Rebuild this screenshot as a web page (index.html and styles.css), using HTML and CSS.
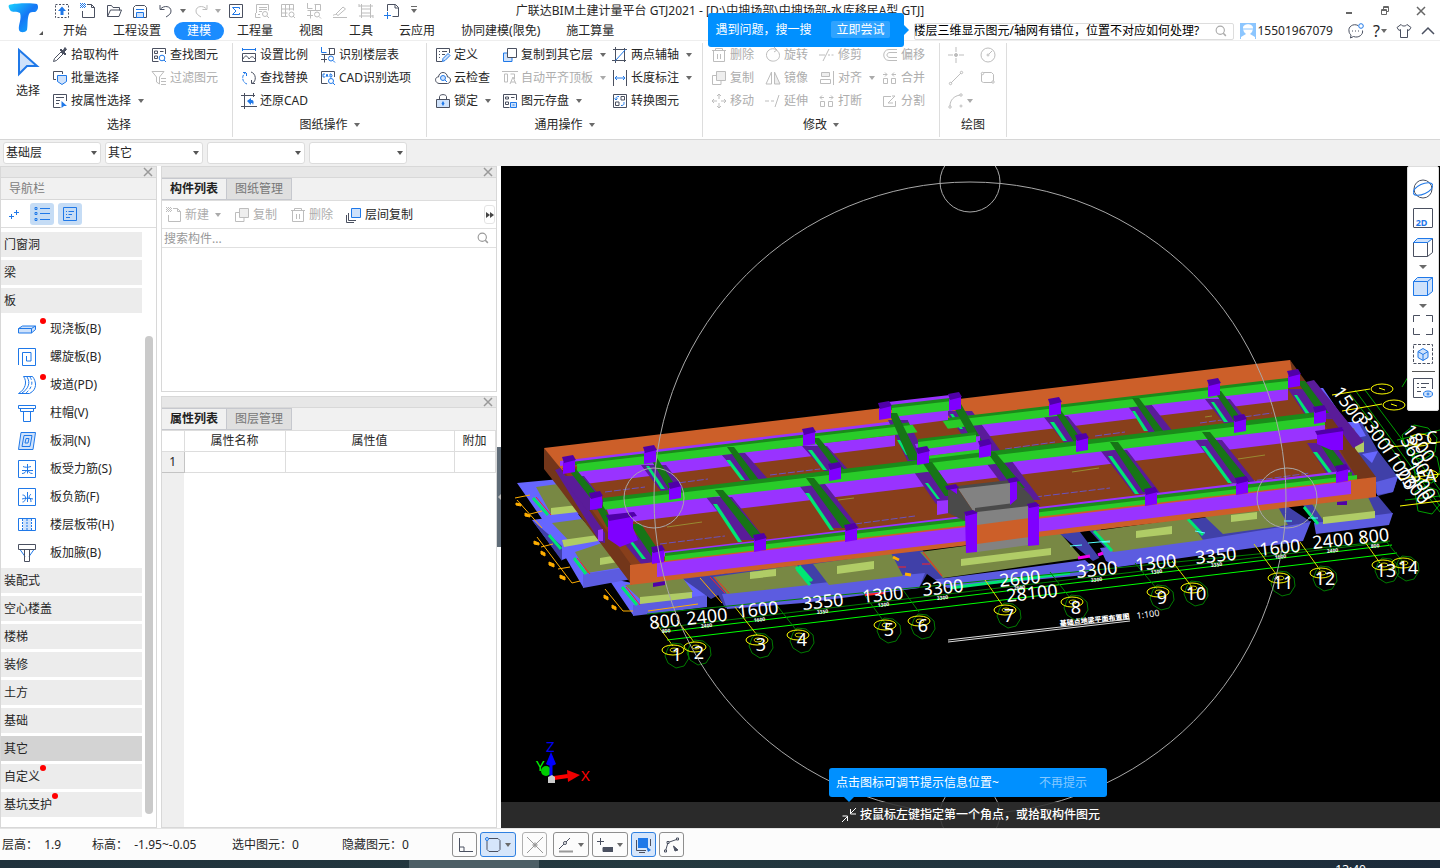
FILE: index.html
```html
<!DOCTYPE html>
<html lang="zh-CN">
<head>
<meta charset="utf-8">
<title>广联达BIM土建计量平台 GTJ2021</title>
<link rel="stylesheet" href="styles.css">
</head>
<body>
<svg class="defs" aria-hidden="true">
  <defs>
    <linearGradient id="lg" x1="0" y1="0" x2="1" y2="1"><stop offset="0" stop-color="#19d3ff"/><stop offset=".5" stop-color="#1677f5"/><stop offset="1" stop-color="#10b4ff"/></linearGradient>
    <symbol id="i-up" viewBox="0 0 16 16"><path d="M1.500 1.500h13v13h-13z" stroke-dasharray="2 1.500"/><path class="af" d="M8 3.500l4 4.500H9.500v4h-3V8H4z"/></symbol>
    <symbol id="i-new" viewBox="0 0 16 16"><path d="M7 1.500h4.500l3 3v10h-12V8M11.500 1.500v3h3"/><path class="a" d="M0 .500h5M1 1.500h5M0 2.500h5M1 3.500h5M0 4.500h5" stroke-dasharray="1 1"/></symbol>
    <symbol id="i-open" viewBox="0 0 16 16"><path d="M1.500 13.500v-11h4l1.500 2h6.500v3M1.500 13.500l3-6.500h11l-2.500 6.500z"/></symbol>
    <symbol id="i-save" viewBox="0 0 16 16"><path d="M1.500 14.500v-10l2-2h9l2 2v10z"/><path class="al" d="M4.500 9.500h7v5h-7z"/><path class="a" d="M4 6.500h8"/></symbol>
    <symbol id="i-undo" viewBox="0 0 16 16"><path d="M2 2v4.500h4.500M2.500 6C6 2 13 3 13 8c0 3-2 4-5 6"/></symbol>
    <symbol id="i-redo" viewBox="0 0 16 16"><path d="M14 2v4.500H9.500M13.500 6C10 2 3 3 3 8c0 3 2 4 5 6"/></symbol>
    <symbol id="i-sum" viewBox="0 0 16 16"><path d="M1.500 1.500h13v13h-13z"/><path class="a" d="M11.500 6V4.500h-7L8 8l-3.500 3.500h7V10"/></symbol>
    <symbol id="i-rows" viewBox="0 0 16 16"><path d="M2.500 10V1.500h12v6M1.500 10v4.500h5M4 11.500h2M5 4.500h8M5 6.500h8M5 8.500h3" /><circle cx="11" cy="11" r="2.500"/><path d="M13 13l2 2"/></symbol>
    <symbol id="i-grid" viewBox="0 0 16 16"><path d="M1.500 14V1.500h12v6M1.500 6h12M1.500 10h6M5.500 1.500v12M9.500 1.500v6M1.500 13.500h6"/><circle cx="11.500" cy="11.500" r="2.500"/><path d="M13 13l2 2"/></symbol>
    <symbol id="i-plan" viewBox="0 0 16 16"><path class="a" d="M1.500 0v5.500h5"/><path d="M8.500 1.500h6v6h-13M4.500 7.500v8M1 12.500h6M9.500 1.500v6"/><circle class="a" cx="11" cy="11.500" r="2.500"/><path class="a" d="M13 13.500l2 2"/></symbol>
    <symbol id="i-brush" viewBox="0 0 16 16"><path d="M1 14.500h14M4 11l7-7 2.500 2L6 12.500zM1 12.500c1-1 2-1 3-1"/></symbol>
    <symbol id="i-rebar" viewBox="0 0 16 16"><path d="M3.500 1v14M12.500 1v14M1 3h14M1 13h14M3.500 6h9M3.500 10h9M1 1v3M15 12v3"/></symbol>
    <symbol id="i-adddoc" viewBox="0 0 16 16"><path d="M3.500 8V1.500h8l3 3v9h-6M11 1.500V5h3.500"/><path class="a" d="M0 12.500h7M3.500 9v7"/></symbol>
    <symbol id="i-cursor" viewBox="0 0 24 30"><path class="al" stroke-width="2" d="M3 3l18 16H11l-8 8z"/></symbol>
    <symbol id="i-pick" viewBox="0 0 16 16"><path d="M1.500 14.500l1-3L9 5l2 2-6.500 6.500z"/><path class="f" d="M8 3l5 5 1-1-2-2 2.500-2.500-1.500-2L11 4 9 2z"/></symbol>
    <symbol id="i-batch" viewBox="0 0 16 16"><path d="M4 9.500H1.500v-8h9V4"/><path class="al" d="M5.500 5.500l9 0v6l-4.500 3-4.500-3z"/></symbol>
    <symbol id="i-prop" viewBox="0 0 16 16"><path d="M14.500 8V1.500h-13v13h7M4 4.500h8M4 7.500h4M4 10.500h3"/><path class="af" d="M9.500 8l5.500 5h-3l-2.500 2z"/></symbol>
    <symbol id="i-find" viewBox="0 0 16 16"><path d="M14.500 7V1.500h-13v13h6M3.500 4h3v2.500h-3zM9 4.500h3.500M3.500 9h3v2.500h-3z"/><circle class="a" cx="11" cy="11" r="2.800"/><path class="a" d="M13 13l2 2"/></symbol>
    <symbol id="i-filter" viewBox="0 0 16 16"><path d="M1 1.500h12L8.500 7v7l-3-2V7zM10 8.500h5M10 11.500h5M10 14.500h5"/></symbol>
    <symbol id="i-scale" viewBox="0 0 16 16"><path class="a" d="M1 2.500h14M1.500 1v3M14.500 1v3"/><path d="M1.500 6.500h13v8h-13zM2 12c2-4 4-4 6 0 2-3 4-3 6 0"/></symbol>
    <symbol id="i-swap" viewBox="0 0 16 16"><path class="a" d="M6 14C1 12.500 0 5 5 2.500M2 2.500h3.500V6" stroke-dasharray="3 1"/><path d="M10 2c5 1.500 6 9 1 11.500M14 13.500h-3.500V10"/></symbol>
    <symbol id="i-back" viewBox="0 0 16 16"><path d="M0 2.500h14M3.500 0v16M0 13.500h16M12.500 0v4"/><path class="af" d="M6 8l4-3v2c3 0 3 2 2 5-.500-2-1-2-2-2v2z"/></symbol>
    <symbol id="i-cad" viewBox="0 0 16 16"><path d="M14.500 7V1.500h-13v12h6"/><path class="a" d="M5 4H3v3h2M6 7l1-3 1 3M10 4v3h1.500l.5-1.500L11 4z"/><circle class="a" cx="11" cy="11" r="2.500"/><path class="a" d="M13 13l2 2"/></symbol>
    <symbol id="i-define" viewBox="0 0 16 16"><path d="M7 14.500H1.500v-13h13V6M4 4.500h1M7 4.500h5M4 7.500h1M7 7.500h3M4 10.500h1"/><path class="al" d="M7.500 14.500l.5-3 5-5 2 2-5 5z"/></symbol>
    <symbol id="i-cloud" viewBox="0 0 16 16"><path d="M4 13.500C-1 12.500 0 6.500 3.500 7 4 1 12 1 12.500 7c4 0 4 6 0 6.500z"/><circle class="al" cx="8" cy="8" r="2.500"/><path class="a" d="M10 10l2 2"/></symbol>
    <symbol id="i-lock" viewBox="0 0 16 16"><path d="M4.500 6V3.500C5 1 11 1 11.500 3.500V6"/><path class="l" d="M1.500 6.500h13v8h-13z"/><path class="af" d="M8 8l1.500 2.500L8 13l-1.500-2.500z"/></symbol>
    <symbol id="i-copyto" viewBox="0 0 16 16"><path class="al" d="M5 6H1.500v8.500H10V11"/><path class="w" d="M5.500 1.500h9v9h-9z"/></symbol>
    <symbol id="i-align" viewBox="0 0 16 16"><path d="M0 1.500h16M2.500 4h3v8h-3zM8.500 4h4v5M8 14l3-7 3 7M9 12h4"/></symbol>
    <symbol id="i-store" viewBox="0 0 16 16"><path d="M14.500 7V1.500h-13v13h6M3.500 4h3v2h-3zM9 4.500h3.500M3.500 9h3v2.500h-3z"/><path class="al" d="M8.500 9.500h6v5h-6zM10.500 12h2"/></symbol>
    <symbol id="i-axis2" viewBox="0 0 16 16"><path d="M1 2.500h14M3.500 0v16M0 13.500h14M12.500 1v14"/><path class="a" d="M3.500 13.500l10-11"/></symbol>
    <symbol id="i-len" viewBox="0 0 16 16"><path d="M1.500 0v16M14.500 0v16"/><path class="a" d="M3 8h10M5 6L3 8l2 2M11 6l2 2-2 2"/></symbol>
    <symbol id="i-convert" viewBox="0 0 16 16"><path d="M1.500 1.500h13v13h-13zM9 3.500h3.500V7H9zM3.500 9H7v3.500H3.500z"/><path class="a" d="M7 3.500c-3 0-3 1-3 3.500M2.500 5.500L4 7l1.500-1.500M9 12.500c3 0 3-1 3-3.500"/></symbol>
    <symbol id="i-trash" viewBox="0 0 16 16"><path d="M1 3.500h14M4.500 3V1.500h7V3M2.500 4v10.500h11V4M6.500 7v5M9.500 7v5"/></symbol>
    <symbol id="i-rotate" viewBox="0 0 16 16"><path d="M11 2.500C6 0 1 4 1.500 8.500c1 8 13 7 13 0 0-2-1-4-2.500-5M9 0l3 3-3 2"/></symbol>
    <symbol id="i-trim" viewBox="0 0 16 16"><path d="M0 8h6M4 14L10 2"/><path d="M9 8h6" stroke-dasharray="2 1.500"/></symbol>
    <symbol id="i-offset" viewBox="0 0 16 16"><path d="M15 2.500H7c-7 0-7 11 0 11h8M15 5.500H8c-4 0-4 5 0 5h7"/></symbol>
    <symbol id="i-copy" viewBox="0 0 16 16"><path d="M5 5.500H1.500v9H10V11"/><path class="l" d="M5.500 1.500h9v9h-9z"/></symbol>
    <symbol id="i-mirror" viewBox="0 0 16 16"><path d="M6.500 2v12H1z"/><path class="l" d="M9.500 2v12H15z"/></symbol>
    <symbol id="i-al" viewBox="0 0 16 16"><path class="l" d="M2.500 2.500h8v4h-8z"/><path d="M1.500 9.500h10v4h-10zM14.500 1v14"/></symbol>
    <symbol id="i-merge" viewBox="0 0 16 16"><path d="M1.500 8.500h4v5h-4zM9.500 8.500h4v5h-4zM1 4.500h4M3 2.500l2 2-2 2M14 4.500h-4M12 2.500l-2 2 2 2"/></symbol>
    <symbol id="i-break" viewBox="0 0 16 16"><path d="M1.500 8.500h4v5h-4zM9.500 8.500h4v5h-4zM5 4.500H1M3 2.500l-2 2 2 2M10 4.500h4M12 2.500l2 2-2 2"/></symbol>
    <symbol id="i-move" viewBox="0 0 16 16"><path d="M8 1v5M8 10v5M1 8h5M10 8h5M6 3l2-2 2 2M6 13l2 2 2-2M3 6L1 8l2 2M13 6l2 2-2 2"/></symbol>
    <symbol id="i-extend" viewBox="0 0 16 16"><path d="M0 8h9" stroke-dasharray="4 2"/><path d="M10 14l4-12"/></symbol>
    <symbol id="i-split" viewBox="0 0 16 16"><path d="M9 3.500H1.500v10h12V8M6 10l7-7M10 3h3M6 10h5"/></symbol>
    <symbol id="i-point" viewBox="0 0 16 16"><path d="M0 8h5M11 8h5M8 0v5M8 11v5"/><circle class="f" cx="8" cy="8" r="1.500"/></symbol>
    <symbol id="i-circle" viewBox="0 0 16 16"><circle cx="8" cy="8" r="7"/><circle cx="8" cy="8" r="1"/><path d="M9 7l3-3"/></symbol>
    <symbol id="i-line" viewBox="0 0 16 16"><path d="M3 13L13 3"/><circle cx="2.500" cy="13.500" r="1.200"/><circle cx="13.500" cy="2.500" r="1.200"/></symbol>
    <symbol id="i-rect" viewBox="0 0 16 16"><path d="M3.500 2.500h8l2 2v8h-10l-2-1v-8z"/><circle class="w" cx="2.500" cy="3.500" r="1.200"/><circle class="w" cx="13" cy="12" r="1.200"/></symbol>
    <symbol id="i-arc" viewBox="0 0 16 16"><path d="M2 13C2 7 6 3 12 2"/><circle cx="2" cy="14" r="1.200"/><circle cx="13" cy="2" r="1.200"/><circle cx="13" cy="13" r="1"/></symbol>
    <symbol id="i-search" viewBox="0 0 16 16"><circle cx="7" cy="7" r="5.500" stroke-width="1.500"/><path d="M11 11l3.500 3.500" stroke-width="2"/></symbol>
    <symbol id="i-chat" viewBox="0 0 16 16"><path d="M10 2.500C5 0 0 4 1 8c0 2 1 3 2 4l-.500 3 3-1.500c5 2 10-2 9-6M4 8h1M7 8h1M10 8h1"/><circle class="a" cx="13" cy="3" r="2.300"/></symbol>
    <symbol id="i-shirt" viewBox="0 0 16 16"><path d="M5 1.500c1 2 5 2 6 0l4 3-2 3-1.500-1v8h-7v-8l-1.500 1-2-3z"/></symbol>
    <symbol id="i-chev" viewBox="0 0 16 16"><path d="M2 11l6-6 6 6" stroke-width="1.500"/></symbol>
    <symbol id="i-x" viewBox="0 0 16 16"><path d="M4 4l8 8M12 4l-8 8" stroke-width="1.500"/></symbol>
    <symbol id="i-min" viewBox="0 0 16 16"><path d="M5 10h6" stroke-width="2"/></symbol>
    <symbol id="i-restore" viewBox="0 0 16 16"><path d="M4.500 6.500h5v5h-5zM4.500 7.500h5M6.500 6V3.500h5v5H10M6.500 4.500h5"/></symbol>
    <symbol id="i-plus" viewBox="0 0 16 16"><path class="a" d="M3 10.500h5M5.500 8v5M8 6.500h5M10.500 4v5"/></symbol>
    <symbol id="i-list" viewBox="0 0 16 16"><path class="a" d="M6 2.500h10M6 7.500h10M6 13.500h10M1 1.500h2v2H1zM1 6.500h2v2H1zM1 12.500h2v2H1z"/></symbol>
    <symbol id="i-doc" viewBox="0 0 16 16"><path class="a" d="M1.500 1.500h13v13h-13zM4 5.500h1M6.500 5.500H12M4 8.500h1M6.500 8.500H10M4 11.500h4"/></symbol>
    <symbol id="i-layers" viewBox="0 0 16 16"><path d="M2.500 6v7.500H10M.500 8v7.500H8"/><path class="al" d="M5.500 1.500h9v9h-9z"/></symbol>
    <symbol id="n-slab" viewBox="0 0 18 18"><path class="al" d="M.500 8.500l4-2.500h13v3.500l-4 3.500H.500z"/><path class="a" d="M.500 8.500h13V13M13.500 8.500l4-2.500"/></symbol>
    <symbol id="n-spiral" viewBox="0 0 18 18"><path class="a" d="M.500 17V.500h17v17H4.500v-13H13v8.500H8.500V8"/></symbol>
    <symbol id="n-ramp" viewBox="0 0 18 18"><path class="a" d="M5.500 .500c4 5 2 13-5 17h11c8-4 7-12 3-17zM9 1c4 6 1 12-5 16"/><path class="a" d="M12 1c4 6 1 12-4 16" stroke-dasharray="3 2"/></symbol>
    <symbol id="n-cap" viewBox="0 0 18 18"><path class="a" d="M.500 1.500h17v3h-17zM2.500 4.500h13v3h-13zM5.500 7.500h7v10h-7z"/></symbol>
    <symbol id="n-hole" viewBox="0 0 18 18"><path class="al" d="M3 .500h14.500L15 17.500H.500zM6 3.500h8l-2 11H4z"/><path class="a" d="M8 6.500h3L10 11H7z"/></symbol>
    <symbol id="n-force" viewBox="0 0 18 18"><path class="a" d="M.500 .500h17v17H.500zM4 10.500h11M5 6.500c2 1 5 1 8 0M9.500 4v9.500M4 13.500c3 0 4-2 4-3M14.500 13.500c-3 0-4-2-4-3"/></symbol>
    <symbol id="n-neg" viewBox="0 0 18 18"><path class="a" d="M.500 .500h17v17H.500zM4 11c3-1 7-1 11 0M9.500 4v10M4.500 7c2 0 3 1 3 3s-1 4-3 4M13 6c-1 1-2 2-2 4 1 0 2 1 2 4"/></symbol>
    <symbol id="n-band" viewBox="0 0 18 18"><path fill="#cfe2fb" stroke="none" d="M5 3h8v12H5z"/><path class="a" d="M.500 2.500h17v12H.500z"/><path class="a" d="M4.500 3v11M9 3v11M13.500 3v11" stroke-dasharray="2 1"/></symbol>
    <symbol id="n-haunch" viewBox="0 0 18 18"><path class="al" d="M2 5.500l5 7M16 5.500l-5 7"/><path d="M.500 .500h17v5H.500zM6.500 5.500h5v12h-5z"/></symbol>
    <symbol id="v-orbit" viewBox="0 0 20 20"><circle cx="10" cy="10" r="9"/><ellipse class="a" cx="10" cy="10" rx="10.500" ry="5" transform="rotate(-25 10 10)"/></symbol>
    <symbol id="v-cube" viewBox="0 0 20 20"><path d="M.500 5.500h14v14h-14zM14.500 19.500l5-4V1.500"/><path class="al" d="M.500 5.500l4-4h15l-5 4z"/></symbol>
    <symbol id="v-solid" viewBox="0 0 20 20"><path class="al" d="M.500 5.500l4-4h15v14l-5 4h-14z"/><path class="a" d="M.500 5.500h14v14M14.500 5.500l5-4"/></symbol>
    <symbol id="v-full" viewBox="0 0 20 20"><path d="M.500 7V.500H7M13 .500h6.500V7M19.500 13v6.500H13M7 19.500H.500V13"/></symbol>
    <symbol id="v-sel" viewBox="0 0 20 20"><path d="M.500 .500h19v19H.500z" stroke-dasharray="3 1.500"/><path class="al" d="M10 4.500l5 3v6l-5 3-5-3v-6z"/><path class="a" d="M5 7.500l5 3 5-3M10 10.500v6"/></symbol>
    <symbol id="v-eye" viewBox="0 0 20 20"><path d="M19.500 11V.500H.500v19H10M4 5.500h2M8 5.500h8M4 9.500h2M8 9.500h5M4 13.500h4"/><ellipse class="al" cx="15" cy="16" rx="4.500" ry="3"/><circle class="a" cx="15" cy="16" r="1"/></symbol>
    <symbol id="s-ortho" viewBox="0 0 16 16"><path d="M2.500 1v13.500H16M2.500 10H7v4.500"/></symbol>
    <symbol id="s-snap" viewBox="0 0 16 16"><path d="M4 1.500h9l2 2v9l-2 2H4l-2-2V4"/><circle class="a" cx="2" cy="2" r="1.500"/></symbol>
    <symbol id="s-cross" viewBox="0 0 16 16"><path d="M0 0l16 16M16 0L0 16"/><circle cx="8" cy="8" r="2"/></symbol>
    <symbol id="s-angle" viewBox="0 0 16 16"><path d="M1 12L12 1"/><path stroke="#999" d="M1 14.500h14" stroke-width="2"/><circle class="w" cx="7" cy="6" r="1.500"/></symbol>
    <symbol id="s-input" viewBox="0 0 16 16"><path d="M0 4.500h7M3.500 1v7"/><path class="f" d="M6 10.500h10v4H6z"/></symbol>
    <symbol id="s-screen" viewBox="0 0 16 16"><path class="af" d="M2 1h10v10H2z"/><path d="M.500 3v10.500H10M14.500 2v7M3 15.500h6"/><path class="af" d="M10 9l5 4-3 2z"/></symbol>
    <symbol id="s-curve" viewBox="0 0 16 16"><path d="M1.500 14L4 5.500 14 2"/><path class="w" d="M.500 13h2v2h-2zM3 4.500h2v2H3zM12.500 1h2v2h-2z"/><path class="f" d="M9.500 9l4.500 4-3 1z"/></symbol>
    <g id="col"><path fill="#7f00ff" d="M-6 3L6 0v13l-12 2z"/><path fill="#5000a8" d="M-7-2L4-4l3 5-12 3z"/></g>
    <g id="bub"><path stroke="#007a00" d="M-5-12l9 1 7 6 1 8-5 8-8 2-8-5-3-7 3-8z"/><ellipse stroke="#ff0" cx="-4" cy="-5" rx="11" ry="5"/><ellipse stroke="#cc0" cx="-3" cy="-5" rx="4" ry="2"/></g>
  </defs>
</svg>

<header class="top">
  <div class="titlebar">
    <div class="quick">
      <button class="qb" aria-label="上传"><svg class="ic"><use href="#i-up"/></svg></button>
      <button class="qb" aria-label="新建"><svg class="ic"><use href="#i-new"/></svg></button>
      <button class="qb" aria-label="打开"><svg class="ic"><use href="#i-open"/></svg></button>
      <button class="qb" aria-label="保存"><svg class="ic"><use href="#i-save"/></svg></button>
      <button class="qb wide" aria-label="撤销"><svg class="ic"><use href="#i-undo"/></svg><i class="tri"></i></button>
      <button class="qb wide off" aria-label="恢复"><svg class="ic"><use href="#i-redo"/></svg><i class="tri"></i></button>
      <button class="qb" aria-label="汇总计算"><svg class="ic"><use href="#i-sum"/></svg></button>
      <button class="qb off" aria-label="查看"><svg class="ic"><use href="#i-rows"/></svg></button>
      <button class="qb off" aria-label="查表"><svg class="ic"><use href="#i-grid"/></svg></button>
      <button class="qb off" aria-label="查图"><svg class="ic"><use href="#i-plan"/></svg></button>
      <button class="qb off" aria-label="编辑"><svg class="ic"><use href="#i-brush"/></svg></button>
      <button class="qb off" aria-label="钢筋"><svg class="ic"><use href="#i-rebar"/></svg></button>
      <button class="qb" aria-label="添加"><svg class="ic"><use href="#i-adddoc"/></svg></button>
      <button class="qb small" aria-label="更多"><i class="tri bar"></i></button>
    </div>
    <h1 class="title">广联达BIM土建计量平台 GTJ2021 - [D:\中坤场部\中坤场部-水库移民A型.GTJ]</h1>
    <div class="win">
      <button aria-label="最小化"><svg class="ic"><use href="#i-min"/></svg></button>
      <button aria-label="还原"><svg class="ic"><use href="#i-restore"/></svg></button>
      <button aria-label="关闭"><svg class="ic"><use href="#i-x"/></svg></button>
    </div>
  </div>
  <div class="menubar">
    <nav class="menu">
      <a href="#">开始</a><a href="#">工程设置</a><a href="#" class="on">建模</a><a href="#">工程量</a><a href="#">视图</a><a href="#">工具</a><a href="#">云应用</a><a href="#">协同建模(限免)</a><a href="#">施工算量</a>
    </nav>
    <div class="account">
      <div class="ask">
        <input type="text" aria-label="搜索问题" value="楼层三维显示图元/轴网有错位，位置不对应如何处理?">
        <svg class="ic s12"><use href="#i-search"/></svg>
        <div class="tip-ask"><span>遇到问题，搜一搜</span><button>立即尝试</button></div>
      </div>
      <a href="#" class="user"><svg class="avatar" viewBox="0 0 16 16"><path fill="#8cc6ff" d="M0 0h16v16H0z"/><path fill="#fff" d="M3 5c0-5 10-5 10 0v1l-1 3-2 2 5 3v2H1v-2l5-3-2-2-1-3z"/><path stroke="#8cc6ff" d="M3 6h10"/></svg>15501967079</a>
      <button aria-label="消息"><svg class="ic"><use href="#i-chat"/></svg></button>
      <button aria-label="帮助" class="help">?<i class="tri"></i></button>
      <button aria-label="皮肤"><svg class="ic"><use href="#i-shirt"/></svg></button>
      <button aria-label="收起"><svg class="ic"><use href="#i-chev"/></svg></button>
    </div>
  </div>
  <svg class="logo" viewBox="0 0 46 40"><path fill="url(#lg)" d="M9 5c6-2 24-2 28-1 2 2 1 7-2 8-3 0-5 0-6 2-2 5-1 11-2 16-2 3-7 3-8 0-1-5 3-11 1-17-3-2-8 0-10-3-1-2-2-4-1-5z"/><path fill="#555" d="M43 31v4h-4z"/></svg>
</header>

<section class="ribbon">
  <div class="group g1">
    <div class="body">
      <button class="big"><svg class="ic"><use href="#i-cursor"/></svg>选择</button>
      <div class="tools">
        <button><svg class="ic"><use href="#i-pick"/></svg>拾取构件</button><button><svg class="ic"><use href="#i-find"/></svg>查找图元</button>
        <button><svg class="ic"><use href="#i-batch"/></svg>批量选择</button><button class="off"><svg class="ic"><use href="#i-filter"/></svg>过滤图元</button>
        <button><svg class="ic"><use href="#i-prop"/></svg>按属性选择<i class="tri"></i></button>
      </div>
    </div>
    <div class="cap">选择</div>
  </div>
  <div class="group g2">
    <div class="tools">
      <button><svg class="ic"><use href="#i-scale"/></svg>设置比例</button><button><svg class="ic"><use href="#i-plan"/></svg>识别楼层表</button>
      <button><svg class="ic"><use href="#i-swap"/></svg>查找替换</button><button><svg class="ic"><use href="#i-cad"/></svg>CAD识别选项</button>
      <button><svg class="ic"><use href="#i-back"/></svg>还原CAD</button>
    </div>
    <div class="cap">图纸操作<i class="tri"></i></div>
  </div>
  <div class="group g3">
    <div class="tools">
      <button><svg class="ic"><use href="#i-define"/></svg>定义</button><button><svg class="ic"><use href="#i-copyto"/></svg>复制到其它层<i class="tri"></i></button><button><svg class="ic"><use href="#i-axis2"/></svg>两点辅轴<i class="tri"></i></button>
      <button><svg class="ic"><use href="#i-cloud"/></svg>云检查</button><button class="off"><svg class="ic"><use href="#i-align"/></svg>自动平齐顶板<i class="tri"></i></button><button><svg class="ic"><use href="#i-len"/></svg>长度标注<i class="tri"></i></button>
      <button><svg class="ic"><use href="#i-lock"/></svg>锁定<i class="tri"></i></button><button><svg class="ic"><use href="#i-store"/></svg>图元存盘<i class="tri"></i></button><button><svg class="ic"><use href="#i-convert"/></svg>转换图元</button>
    </div>
    <div class="cap">通用操作<i class="tri"></i></div>
  </div>
  <div class="group g4">
    <div class="tools">
      <button class="off"><svg class="ic"><use href="#i-trash"/></svg>删除</button><button class="off"><svg class="ic"><use href="#i-rotate"/></svg>旋转</button><button class="off"><svg class="ic"><use href="#i-trim"/></svg>修剪</button><button class="off"><svg class="ic"><use href="#i-offset"/></svg>偏移</button>
      <button class="off"><svg class="ic"><use href="#i-copy"/></svg>复制</button><button class="off"><svg class="ic"><use href="#i-mirror"/></svg>镜像</button><button class="off"><svg class="ic"><use href="#i-al"/></svg>对齐<i class="tri"></i></button><button class="off"><svg class="ic"><use href="#i-merge"/></svg>合并</button>
      <button class="off"><svg class="ic"><use href="#i-move"/></svg>移动</button><button class="off"><svg class="ic"><use href="#i-extend"/></svg>延伸</button><button class="off"><svg class="ic"><use href="#i-break"/></svg>打断</button><button class="off"><svg class="ic"><use href="#i-split"/></svg>分割</button>
    </div>
    <div class="cap">修改<i class="tri"></i></div>
  </div>
  <div class="group g5">
    <div class="tools">
      <button class="off" aria-label="点"><svg class="ic"><use href="#i-point"/></svg></button><button class="off" aria-label="圆"><svg class="ic"><use href="#i-circle"/></svg></button>
      <button class="off" aria-label="直线"><svg class="ic"><use href="#i-line"/></svg></button><button class="off" aria-label="矩形"><svg class="ic"><use href="#i-rect"/></svg></button>
      <button class="off" aria-label="弧线"><svg class="ic"><use href="#i-arc"/></svg><i class="tri tight"></i></button>
    </div>
    <div class="cap">绘图</div>
  </div>
</section>

<section class="selbar">
  <label class="sel"><select aria-label="楼层"><option>基础层</option></select></label>
  <label class="sel"><select aria-label="构件类型"><option>其它</option></select></label>
  <label class="sel"><select aria-label="构件"><option></option></select></label>
  <label class="sel"><select aria-label="名称"><option></option></select></label>
</section>

<main class="main">
  <aside class="nav">
    <div class="strip"><button aria-label="关闭导航栏"><svg class="ic"><use href="#i-x"/></svg></button></div>
    <h2 class="navhead">导航栏</h2>
    <div class="navtools">
      <button aria-label="展开"><svg class="ic"><use href="#i-plus"/></svg></button>
      <button class="on" aria-label="列表"><svg class="ic"><use href="#i-list"/></svg></button>
      <button class="on" aria-label="详情"><svg class="ic"><use href="#i-doc"/></svg></button>
    </div>
    <div class="navbody">
      <div class="tree">
        <a href="#" class="cat">门窗洞</a>
        <a href="#" class="cat">梁</a>
        <a href="#" class="cat">板</a>
        <a href="#" class="leaf"><span class="nicon dot"><svg class="ic"><use href="#n-slab"/></svg></span>现浇板(B)</a>
        <a href="#" class="leaf"><span class="nicon"><svg class="ic"><use href="#n-spiral"/></svg></span>螺旋板(B)</a>
        <a href="#" class="leaf"><span class="nicon dot"><svg class="ic"><use href="#n-ramp"/></svg></span>坡道(PD)</a>
        <a href="#" class="leaf"><span class="nicon"><svg class="ic"><use href="#n-cap"/></svg></span>柱帽(V)</a>
        <a href="#" class="leaf"><span class="nicon"><svg class="ic"><use href="#n-hole"/></svg></span>板洞(N)</a>
        <a href="#" class="leaf"><span class="nicon"><svg class="ic"><use href="#n-force"/></svg></span>板受力筋(S)</a>
        <a href="#" class="leaf"><span class="nicon"><svg class="ic"><use href="#n-neg"/></svg></span>板负筋(F)</a>
        <a href="#" class="leaf"><span class="nicon"><svg class="ic"><use href="#n-band"/></svg></span>楼层板带(H)</a>
        <a href="#" class="leaf"><span class="nicon"><svg class="ic"><use href="#n-haunch"/></svg></span>板加腋(B)</a>
        <a href="#" class="cat">装配式</a>
        <a href="#" class="cat">空心楼盖</a>
        <a href="#" class="cat">楼梯</a>
        <a href="#" class="cat">装修</a>
        <a href="#" class="cat">土方</a>
        <a href="#" class="cat">基础</a>
        <a href="#" class="cat on">其它</a>
        <a href="#" class="cat"><span class="dot">自定义</span></a>
        <a href="#" class="cat"><span class="dot">基坑支护</span></a>
      </div>
      <div class="sbar"><div class="thumb"></div></div>
    </div>
  </aside>

  <div class="mid">
    <section class="panel pa">
      <div class="strip"><button aria-label="关闭构件列表"><svg class="ic"><use href="#i-x"/></svg></button></div>
      <div class="tabs"><button class="on">构件列表</button><button>图纸管理</button></div>
      <div class="ptools">
        <button class="off"><svg class="ic"><use href="#i-new"/></svg>新建<i class="tri"></i></button>
        <button class="off"><svg class="ic"><use href="#i-copy"/></svg>复制</button>
        <button class="off"><svg class="ic"><use href="#i-trash"/></svg>删除</button>
        <button><svg class="ic"><use href="#i-layers"/></svg>层间复制</button>
        <button class="more" aria-label="更多"><i class="rt"></i><i class="rt"></i></button>
      </div>
      <div class="psearch"><input type="text" placeholder="搜索构件..." aria-label="搜索构件"><svg class="ic s12"><use href="#i-search"/></svg></div>
    </section>
    <section class="panel pb">
      <div class="strip"><button aria-label="关闭属性列表"><svg class="ic"><use href="#i-x"/></svg></button></div>
      <div class="tabs"><button class="on">属性列表</button><button>图层管理</button></div>
      <table class="props">
        <colgroup><col class="c0"><col class="c1"><col class="c2"><col class="c3"></colgroup>
        <thead><tr><th></th><th>属性名称</th><th>属性值</th><th>附加</th></tr></thead>
        <tbody><tr><td>1</td><td></td><td></td><td></td></tr></tbody>
      </table>
      <div class="gutter"></div>
    </section>
  </div>
  <div class="split"><button aria-label="折叠面板"></button></div>

  <section class="view">
    <svg class="scene" viewBox="501 166 939 662" preserveAspectRatio="xMidYMid slice">
      <!-- foundation slabs, left -->
      <path fill="#6666ff" d="M517 483l43-4 27 34-45 6zM532 520l46-6 24 30-40 16zM563 553l40-10 30 30-50 14zM608 578l24 5 60-8 15 22-74 18z"/>
      <path fill="#5c5ce0" d="M583 574l49-7v12l-49 9zM633 605l74-10v12l-74 9z"/>
      <path fill="#4040a8" d="M680 577l40-8 2 24-11 6zM532 520l30 26v15zM600 545l32 22-30-5z"/>
      <path fill="#788844" d="M536 487l22-3 25 26-32 4zM552 523l30-4 18 20-30 3zM575 552l36-12 19 26-43 7zM625 585l57-8 11 15-53 7z"/>
      <path fill="#b0cc66" d="M551 508l27-3v7l-27 3zM562 540l36-5v6l-34 6zM600 558l18-3v7l-18 3zM640 597l52-5v6l-52 6z"/>
      <path stroke="#00e673" stroke-width="3" d="M533 498l15 17M549 535l12 14M574 558l12 16M622 587l15 18"/>
      <path stroke="#f22" d="M536 497l15 18M577 558l13 16M626 587l14 18"/>
      <g stroke="#ffae00"><path d="M517 500l25 28M537 537l35 46 8-2M605 589l18 22h10M515 498l15-3M530 514l12-3M541 547l12-3M558 569l12-2M700 578l22 25M648 611l50-7"/><path fill="#ffae00" d="M516 503l5 1v2l-5-1zM525 513l5 2v2l-5-1zM534 541l5 2v2l-5-1zM541 551l4 2v3l-4-2zM549 562l5 2v3l-5-2zM560 575l5 2v3l-5-2zM604 595l4 2v3l-4-2zM612 605l4 2v3l-4-2z"/></g>
      <!-- foundation slabs, front -->
      <path fill="#4040a8" d="M708 576l92-14 120-15 24 31-15 9-204 21z"/>
      <path fill="#5c5ce0" d="M722 594l108-12 95-9-6 15-116 15-76 6zM930 580l155-20 8 7-8 8-138 13z"/>
      <path fill="#000" d="M919 588l8-14 20 14z"/>
      <path fill="#788844" d="M713 577l84-12 12 20-82 9zM813 564l78-11 12 23-74 9zM920 552l140-19 22 25-139 20z"/>
      <path fill="#4040a8" d="M1060 534l40-6 13 23-20 10z"/><path fill="#000" d="M1080 532l9-2 22 24-10 6z"/>
      <path fill="#5c5ce0" d="M1100 548l110-14 101-13-8 20-185 26-12-6z"/>
      <path fill="#4040a8" d="M1187 520l30-4 70-10 24 16-110 18z"/>
      <path fill="#788844" d="M1095 531l93-13 15 22-90 12zM1203 515l74-10 11 20-65 9z"/>
      <path fill="#4040a8" d="M1303 505l75-9 15 18-76 12z"/><path fill="#5c5ce0" d="M1314 523l79-10-4 12-73 9z"/>
      <path fill="#788844" d="M1312 504l56-7 7 15-52 8z"/>
      <path fill="#b0cc66" d="M750 572l26-3v7l-26 3zM837 566l37-5v8l-37 5zM961 559l90-11v7l-90 11zM1136 531l36-5v8l-36 4zM1231 515l26-3v7l-26 3zM1323 517l52-6v7l-52 6z"/>
      <path stroke="#00e673" stroke-width="3" d="M796 567l13 15M799 566l13 15M1094 531l18 20M1188 519l15 16M1304 507l14 17M950 588l120-15M797 569l13 16"/>
      <path stroke="#f22" d="M710 577l15 16M714 577l15 16M923 552l19 24M898 567h8M922 564h8"/>
      <path stroke="#ffae00" stroke-width="3" d="M893 557l6 3M905 574l6 1"/>
      <path stroke="#5ff" d="M1070 546l12-1M1088 543l22-2M1284 521h8M1308 518h10M1195 531l10 2M1102 542h8"/>
      <path stroke="#e0e" stroke-width="3" d="M1078 558l12-2M1098 555l5-2"/>
      <!-- right side slabs -->
      <path fill="#4040a8" d="M1310 390l12-2 25 35 15 0 16 28 20 26-5 15-15 4z"/>
      <path fill="#6666ff" d="M1318 388l5 0 24 36h-9zM1345 422h13l8 14-10 2zM1362 454l16-3-6 12z"/><path fill="#5c5ce0" d="M1376 482l22-6-5 16-16 3z"/>
      <path fill="#b0cc66" d="M1355 443l9-2v11l-9 1z"/><path fill="#788844" d="M1348 430l6-2 2 8-6 2z"/>

      <!-- perimeter wall and floor -->
      <path fill="#73361a" d="M544 448l18 14 70 101v22l-73-97-15-19z"/>
      <path fill="#cc5f29" d="M544 448L1290 360l10 18-738 92z"/>
      <path fill="#73361a" d="M1290 360l86 117-24 4-58-98z"/>
      <path fill="#883f1b" d="M562 468L1297 380l60 98-725 88z"/>
      <path fill="#5a1c99" d="M555 470l5-2 45 65v10l-5-1zM1306 382l8-2 50 62-11 6z"/>
      <path stroke="#6a52c0" stroke-dasharray="7 2" d="M605 492l40-5M670 484l38-5M770 475l50-6M855 469l33-4M660 544l65-8M855 524l60-8M1005 449l50-7M1095 436l30-4M1200 423l72-10M1035 497l75-9M1230 484l80-11"/>
      <path stroke="#988a30" d="M667 527l35-5M838 500l16-2M1072 472l27-4M1238 459l27-4M1205 417l7-1"/>
      <!-- back row of bays -->
      <path fill="#9933ff" d="M560 466L895 426V425L895 421 560 461zM577 471l318-36v11L585 484zM968 425l320-38v13L975 438zM892 405l60-7v17l-60 8z"/>
      <path fill="#5a1c99" d="M560 476h24l27 34h-24zM641 465h25l22 29h-25zM720 453h25l29 33h-25zM802 446h25l26 29h-25zM888 420h20l20 42h-20zM945 411h27l30 42h-27zM1043 416h25l24 30h-25zM1126 404h25l27 34h-25zM1205 399h25l22 28h-25zM1288 389h25l20 30h-25z"/>
      <path fill="#00e673" d="M646 466h3l16 23h-4zM726 460h4l15 20h-4zM808 450h4l15 20h-4zM897 440h3l10 15h-4zM950 414h3l10 15h-3zM1050 422h4l13 19h-4zM1132 411h3l13 20h-4zM1211 402h3l14 20h-4zM1294 395h3l13 19h-4z"/>
      <path fill="#1a8c1a" d="M571 462L1288 378v6L571 466z"/>
      <path fill="#29cc29" d="M577 464L1288 381v8L577 472z"/>
      <path fill="#883f1b" d="M912 424l30-4 10 15-30 4z"/>
      <path fill="#9933ff" d="M905 414l43-5v11l-38 5zM888 402l62-7v5l-62 7z"/>
      <path fill="#1a8c1a" d="M890 405l60-7v5l-60 7z"/><path fill="#29cc29" d="M892 408l60-7v9l-60 7z"/>
      <path fill="#177517" d="M567 468h8l27 32h-10zM650 458h7l22 33h-9zM727 447h7l25 33h-9zM812 438h7l26 32h-9zM889 413h8l23 47h-11zM952 404h9l24 42h-10zM1053 409h7l23 33h-9zM1132 398h7l25 34h-9zM1214 391h7l24 33h-9zM1297 381h8l24 32h-10z"/>
      <!-- stair core beams -->
      <path fill="#9933ff" d="M915 444l65-8v14l-60 7z"/><path fill="#29cc29" d="M918 441l58-7v8l-58 8zM928 456l62-8v8l-62 8z"/><path fill="#1a8c1a" d="M918 439l58-7v3l-58 7z"/>
      <!-- middle row of bays -->
      <path fill="#9933ff" d="M606 507L1325 422v16L612 524zM665 499l26-3v13l-26 4zM826 480l26-4v14l-26 4zM1068 450l26-4v14l-26 3zM1229 430l26-4v13l-26 4z"/>
      <path fill="#5a1c99" d="M617 535h20l25 30h-20zM706 497h26l34 43h-26zM798 484h27l34 44h-27zM914 472h25l22 32h-25zM984 460h27l30 40h-27zM1100 450h27l34 44h-27zM1195 440h27l34 43h-27zM1307 443h27l22 34h-27z"/>
      <path fill="#00e673" d="M626 537h3l17 22h-4zM713 504h4l25 38h-4zM805 493h4l25 37h-4zM925 483h3l12 16h-3zM1108 456h4l27 38h-4zM1201 446h4l27 37h-4zM1313 452h4l17 23h-4z"/>
      <path fill="#1a8c1a" d="M603 498L1325 411v6L603 503z"/><path fill="#29cc29" d="M603 502L1325 416v9L603 510z"/>
      <path fill="#177517" d="M593 501h7l16 26h-9zM630 524h11l22 33h-11zM715 490h8l41 48h-12zM806 478h8l40 50h-12zM922 462h10l24 34h-11zM987 452h8l30 36h-12zM1110 442h8l37 50h-12zM1202 432h8l40 50h-12zM1318 441h8l26 34h-12z"/>
      <!-- front beam and face -->
      <path fill="#9933ff" d="M660 552L1350 470v5L660 557z"/><path fill="#1a8c1a" d="M665 553L1352 472v4L665 557z"/><path fill="#29cc29" d="M665 556L1357 475v5L665 562z"/>
      <path fill="#cc5f29" d="M630 565L1376 477v20L630 585z"/>
      <path fill="#9933ff" d="M657 563L975 526v14L657 577zM1036 519L1351 481v13L1036 532zM598 530l5-1v12h-5z"/>
      <path fill="#7f00ff" d="M608 516l25-4v16l5 12-18 7-12-8zM1317 433l26-5v22l-12 0-14-6z"/>
      <path fill="#5000a8" d="M606 515l28-3 3 4-28 5zM1315 431l27-4 2 4-27 4zM653 583l12-2v4l-12 2zM1337 502l10-1v4h-10z"/>
      <use href="#col" x="569" y="459"/><use href="#col" x="650" y="449"/><use href="#col" x="596" y="495"/><use href="#col" x="675" y="485"/><use href="#col" x="809" y="431"/><use href="#col" x="835" y="466"/><use href="#col" x="885" y="405"/><use href="#col" x="955" y="396"/><use href="#col" x="923" y="450"/><use href="#col" x="985" y="443"/><use href="#col" x="1055" y="401"/><use href="#col" x="1082" y="437"/><use href="#col" x="1214" y="382"/><use href="#col" x="1240" y="418"/><use href="#col" x="1294" y="373"/><use href="#col" x="1320" y="409"/><use href="#col" x="658" y="549"/><use href="#col" x="760" y="537"/><use href="#col" x="851" y="527"/><use href="#col" x="1151" y="491"/><use href="#col" x="1242" y="480"/><use href="#col" x="1342" y="468"/>
      <!-- central shaft -->
      <path fill="#9933ff" d="M937 501l12-1v13l-12 2z"/>
      <path fill="#828282" d="M957 487l53-6v24l-37 6z"/><path fill="#4a4a4a" d="M948 490l10-1 17 25-10 7-17-8zM1016 481l14 14 8 11-26 0zM975 508l55-7v6l-55 6zM957 486l53-6v3l-53 6z"/>
      <path fill="#828282" d="M977 512l52-6v39l-52 7z"/><path fill="#cc5f29" d="M977 525l53-7v19l-53 7z"/>
      <path fill="#7f00ff" d="M965 514l12-2v40l-11 1zM1028 506l11-2v41l-11 1zM1010 482l7-1v18l-7 6zM948 488l9-2v8z"/><path fill="#5000a8" d="M964 512l9-2 5 3-12 3zM1027 504l9-2 4 4-11 2zM945 486l11-2 3 4-12 2zM1007 479l9-2 4 4-11 2z"/>

      <!-- axis grid -->
      <path stroke="#0f0" d="M663 632L1392 545M667 640L1397 553"/><path stroke="#008000" d="M647 614L1390 541M660 628L1388 542M775 603l22 28M863 593l22 30M903 590l16 22M1050 572l20 26M1135 563l22 26M1385 540l18 22"/>
      <path stroke="#dd0" d="M655 622l18 24M677 620l17 22M735 607l22 28M985 580l18 26M1172 561l20 26M1254 544l22 30M1300 542l20 28M1360 535l20 28"/>
      <path stroke="#f22" stroke-width="2" d="M865 595l20-2"/>
      <use href="#bub" x="677" y="655"/><use href="#bub" x="699" y="652"/><use href="#bub" x="761" y="645"/><use href="#bub" x="802" y="640"/><use href="#bub" x="889" y="630"/><use href="#bub" x="923" y="626"/><use href="#bub" x="1009" y="615"/><use href="#bub" x="1076" y="607"/><use href="#bub" x="1162" y="597"/><use href="#bub" x="1196" y="593"/><use href="#bub" x="1283" y="583"/><use href="#bub" x="1325" y="578"/><use href="#bub" x="1387" y="570"/><use href="#bub" x="1407" y="568"/>
      <path stroke="#00a000" d="M1355 390l85 116M1365 390l75 100M1397 440l43-10M1402 387l6-10M1405 500l35-4M1350 394l90 118M1402 435l12-10 14 3 9 10-2 14-12 8-15-5zM1412 455l12-4 13 6 3 14-8 12-16-2zM1415 492l10-6 12 4 5 12-10 12-14-3z"/>
      <path stroke="#ff0" d="M1332 395l38-6M1342 411l40-7M1390 447l50-5M1400 479l40-5M1400 506l40-5M1379 388l6 2M1391 404l6 2"/>
      <g stroke="#ff0"><ellipse cx="1382" cy="389" rx="11" ry="5"/><ellipse cx="1394" cy="405" rx="11" ry="5"/><ellipse cx="1420" cy="440" rx="11" ry="6"/><ellipse cx="1428" cy="475" rx="10" ry="5"/></g>
      <g class="num dim">
        <text transform="translate(650 629) rotate(-6)">800</text><text transform="translate(687 625) rotate(-6)">2400</text><text transform="translate(738 618) rotate(-6)">1600</text><text transform="translate(803 610) rotate(-6)">3350</text><text transform="translate(863 603) rotate(-6)">1300</text><text transform="translate(923 596) rotate(-6)">3300</text><text transform="translate(1000 587) rotate(-6)">2600</text><text transform="translate(1007 602) rotate(-6)">28100</text><text transform="translate(1077 578) rotate(-6)">3300</text><text transform="translate(1136 571) rotate(-6)">1300</text><text transform="translate(1196 564) rotate(-6)">3350</text><text transform="translate(1260 556) rotate(-6)">1600</text><text transform="translate(1313 549) rotate(-6)">2400</text><text transform="translate(1359 544) rotate(-6)">800</text>
        <text transform="translate(1332 392) rotate(55)">1500</text><text transform="translate(1358 418) rotate(55)">3300</text><text transform="translate(1380 448) rotate(58)">11000</text><text transform="translate(1402 430) rotate(55)">1800</text><text transform="translate(1400 440) rotate(62)">3600</text><text transform="translate(1395 474) rotate(50)">2300</text><text transform="translate(1405 466) rotate(60)">1500</text><text x="1426" y="444">C</text><text x="1425" y="482">A</text>
      </g>
      <g class="num ax"><text x="677" y="661">1</text><text x="699" y="659">2</text><text x="761" y="651">3</text><text x="802" y="646">4</text><text x="889" y="636">5</text><text x="923" y="632">6</text><text x="1009" y="622">7</text><text x="1076" y="614">8</text><text x="1162" y="604">9</text><text x="1196" y="600">10</text><text x="1283" y="589">11</text><text x="1325" y="585">12</text><text x="1386" y="577">13</text><text x="1408" y="574">14</text></g>
      <g class="tiny"><text transform="translate(662 633) rotate(-6)">800</text><text transform="translate(701 628) rotate(-6)">2400</text><text transform="translate(754 622) rotate(-6)">1600</text><text transform="translate(817 614) rotate(-6)">3350</text><text transform="translate(878 607) rotate(-6)">1300</text><text transform="translate(937 600) rotate(-6)">3300</text><text transform="translate(1014 590) rotate(-6)">2600</text><text transform="translate(1091 582) rotate(-6)">3300</text><text transform="translate(1151 574) rotate(-6)">1300</text><text transform="translate(1211 567) rotate(-6)">3350</text><text transform="translate(1275 559) rotate(-6)">1600</text><text transform="translate(1327 553) rotate(-6)">2400</text><text transform="translate(1371 548) rotate(-6)">800</text></g>
      <text class="dwg" transform="translate(1060 626) rotate(-6)">基础点地梁平面布置图</text><text class="dscale" transform="translate(1137 619) rotate(-8)">1:100</text>
      <path stroke="#ddd" d="M948 640L1130 619M948 642L1130 621"/>
      <!-- orbit rings -->
      <g stroke="#a8a8a8"><circle cx="970" cy="498" r="316"/><circle cx="970" cy="182" r="30"/><circle cx="654" cy="498" r="30"/><circle cx="1287" cy="498" r="30"/><circle cx="970" cy="814" r="30"/></g>
      <!-- axis tripod -->
      <ellipse fill="#0c0" cx="546" cy="771" rx="5" ry="5"/><path stroke="#00f" stroke-width="3" d="M551 779v-18"/><path fill="#00f" d="M551 752l5 12c-3 2-7 2-10 0z"/><path stroke="#f00" stroke-width="4" d="M554 778l14-2"/><path fill="#e00" d="M567 770l13 5-12 7z"/><path fill="#ccc" d="M548 777l4-2 3 2v6h-7z"/>
      <text class="axl" fill="#0000f0" x="546" y="752">Z</text><text class="axl" fill="#0f0" x="536" y="771">Y</text><text class="axl" fill="#f00" x="581" y="781">X</text>
    </svg>
    <div class="hint">
      <div class="hintmsg"><svg class="ic" viewBox="0 0 16 16"><path d="M15 1L9.500 6.500M9.500 2v5H15M1 15l5.500-5.500M1.500 9h5v5"/></svg>按鼠标左键指定第一个角点，或拾取构件图元
        <div class="tip-hint"><span>点击图标可调节提示信息位置~</span><button>不再提示</button></div>
      </div>
    </div>
    <div class="vtools">
      <button aria-label="动态观察"><svg class="ic"><use href="#v-orbit"/></svg></button>
      <button aria-label="二维"><span class="two">2D</span></button>
      <button aria-label="俯视"><svg class="ic"><use href="#v-cube"/></svg></button>
      <i class="tri"></i>
      <button aria-label="实体"><svg class="ic"><use href="#v-solid"/></svg></button>
      <i class="tri"></i>
      <button aria-label="全屏"><svg class="ic"><use href="#v-full"/></svg></button>
      <button aria-label="局部三维"><svg class="ic"><use href="#v-sel"/></svg></button>
      <hr>
      <button aria-label="显示设置"><svg class="ic"><use href="#v-eye"/></svg></button>
    </div>
  </section>
</main>

<footer class="status">
  <div class="info"><span class="f1">层高：&nbsp; 1.9</span><span class="f2">标高：&nbsp; -1.95~-0.05</span><span class="f3">选中图元：0</span><span>隐藏图元：0</span></div>
  <div class="snap">
    <button aria-label="正交"><svg class="ic"><use href="#s-ortho"/></svg></button>
    <button class="on drop" aria-label="捕捉"><svg class="ic"><use href="#s-snap"/></svg><i class="tri"></i></button>
    <button class="dim" aria-label="交点"><svg class="ic"><use href="#s-cross"/></svg></button>
    <button class="drop" aria-label="角度"><svg class="ic"><use href="#s-angle"/></svg><i class="tri"></i></button>
    <button class="drop" aria-label="动态输入"><svg class="ic"><use href="#s-input"/></svg><i class="tri"></i></button>
    <button class="on" aria-label="选择显示"><svg class="ic"><use href="#s-screen"/></svg></button>
    <button aria-label="折线"><svg class="ic"><use href="#s-curve"/></svg></button>
  </div>
</footer>
<div class="taskbar"><span class="task"></span><time>13:40</time></div>
</body>
</html>
```
FILE: styles.css
```css
* { box-sizing: border-box; }
body {
  margin: 0; height: 100vh; display: flex; flex-direction: column; overflow: hidden;
  background: #fff; color: #262626;
  font: 12px/16px "Noto Sans", "Noto Sans CJK SC", sans-serif;
  --ink: #4a5060; --acc: #1f78e8; --pale: #cfe2fb; --soft: #cfe2fb;
}
button, input, select { font: inherit; color: inherit; border: 0; background: none; padding: 0; margin: 0; }
button { display: flex; align-items: center; justify-content: center; white-space: nowrap; }
a { color: inherit; text-decoration: none; }
h1, h2 { font: inherit; margin: 0; }
.defs { position: absolute; width: 0; height: 0; }
.ic { width: 16px; height: 16px; flex: none; fill: none; stroke: var(--ink); overflow: visible; }
.s12 { width: 12px; height: 12px; }
.a { stroke: var(--acc); }
.af { fill: var(--acc); stroke: none; }
.al { fill: var(--pale); stroke: var(--acc); }
.f { fill: var(--ink); }
.l { fill: var(--soft); }
.w { fill: #fff; }
.tri { width: 0; height: 0; flex: none; border: 3px solid transparent; border-top: 4px solid #6a6a6a; border-bottom: 0; }
.off { color: #adadad; --ink: #bdbdbd; --acc: #bdbdbd; --pale: #f0f0f0; --soft: #eee; }
.off .tri { border-top-color: #aaa; }

/* title and menu */
.top { position: relative; height: 41px; border-bottom: 1px solid #eee; }
.titlebar { display: grid; grid-template-columns: 1fr auto 1fr; height: 21px; align-items: center; }
.quick { display: flex; padding-left: 49px; }
.qb { width: 26px; height: 20px; }
.qb.wide { width: 35px; padding-left: 5px; gap: 6px; justify-content: flex-start; }
.qb.small { width: 18px; }
.bar { position: relative; }
.bar::before { content: ""; position: absolute; left: -3px; top: -7px; width: 6px; height: 1px; background: #6a6a6a; }
.title { white-space: pre; }
.win { display: flex; justify-content: flex-end; padding-right: 1px; --ink: #666; }
.win button { width: 36px; height: 20px; }
.menubar { display: flex; justify-content: space-between; height: 20px; padding-left: 50px; }
.menu { display: flex; padding-top: 1px; }
.menu a { padding: 0 13px; height: 18px; line-height: 18px; white-space: nowrap; }
.menu .on { background: #1b8cff; color: #fff; border-radius: 9px; }
.account { display: flex; align-items: center; }
.account > button { width: 24px; }
.ask { position: relative; display: flex; align-items: center; width: 320px; height: 17px; border: 1px solid #ddd; border-radius: 2px; padding-right: 6px; --ink: #aaa; }
.ask input { flex: 1; min-width: 0; height: 15px; text-indent: -2px; color: #000; outline: 0; }
.tip-ask { position: absolute; right: 329px; top: -11px; display: flex; align-items: center; gap: 19px; padding: 0 14px 0 7px; width: 196px; height: 34px; background: #0090ff; color: #fff; border-radius: 3px; white-space: nowrap; z-index: 3; }
.tip-ask::after { content: ""; position: absolute; left: 100%; top: 12px; border: 5px solid transparent; border-left-color: #0090ff; border-right: 0; }
.tip-ask button { width: 60px; height: 17px; background: #2fa3ff; border-radius: 2px; }
.user { display: flex; align-items: center; gap: 1px; margin: 0 11px 0 6px; }
.avatar { width: 16px; height: 16px; fill: none; }
.account .help { font-size: 16px; gap: 1px; }
.logo { position: absolute; left: 0; top: 0; width: 46px; height: 40px; }

/* ribbon */
.ribbon { display: flex; height: 99px; padding: 2px 0; border-bottom: 1px solid #d6d6d6; }
.group { display: flex; flex-direction: column; border-right: 1px solid #ddd; }
.body { display: flex; }
.tools { display: grid; grid-auto-rows: 23px; justify-items: start; }
.tools button { gap: 3px; }
.tools .tri { margin-left: 4px; }
.tools .tight { margin-left: 0; }
.cap { display: flex; align-items: center; justify-content: center; gap: 6px; height: 27px; }
.big { flex-direction: column; width: 52px; padding: 2px 0 0 4px; gap: 6px; height: 57px; }
.big .ic { width: 24px; height: 30px; }
.g1 { flex: 0 0 233px; } .g1 .tools { grid-template-columns: 99px 80px; }
.g1 .cap { padding-left: 6px; }
.g2 { flex: 0 0 194px; } .g2 .tools { grid-template-columns: 79px 100px; padding-left: 8px; }
.g3 { flex: 0 0 276px; } .g3 .tools { grid-template-columns: 67px 110px 85px; padding-left: 8px; }
.g4 { flex: 0 0 237px; } .g4 .tools { grid-template-columns: 54px 54px 63px 50px; padding-left: 8px; }
.g5 { flex: 0 0 67px; } .g5 .tools { grid-template-columns: 32px 26px; padding-left: 8px; }

.selbar { display: flex; gap: 4px; height: 26px; padding: 2px 3px; background: #f0f0f0; }
.sel { position: relative; width: 98px; height: 22px; }
.sel select { width: 100%; height: 100%; appearance: none; background: #fff; border: 1px solid #dcdcdc; border-radius: 3px; padding: 0 2px; }
.sel::after { content: ""; position: absolute; right: 4px; top: 9px; border: 3px solid transparent; border-top: 4px solid #555; border-bottom: 0; }

/* docked panels */
.main { flex: 1; min-height: 0; display: flex; }
.strip { display: flex; justify-content: flex-end; height: 11px; flex: none; background: #e7e7e7; border-bottom: 1px solid #d8d8d8; --ink: #999; }
.nav { flex: 0 0 157px; display: flex; flex-direction: column; border: 1px solid #d8d8d8; }
.navhead { height: 22px; padding: 3px 8px; background: #f1f1f1; color: #7d7d7d; border-bottom: 1px solid #d8d8d8; }
.navtools { display: flex; align-items: center; gap: 4px; height: 28px; padding-left: 1px; border-bottom: 1px solid #ddd; }
.navtools button { width: 24px; height: 22px; border-radius: 3px; }
.navtools .on { background: #c5dcf5; }
.navbody { flex: 1; min-height: 0; display: flex; padding-top: 4px; }
.tree { width: 141px; display: flex; flex-direction: column; gap: 3px; }
.cat { height: 25px; padding: 5px 3px 4px; background: #ececec; }
.cat.on { background: #d3d3d3; }
.leaf { display: flex; align-items: center; height: 25px; padding-left: 17px; gap: 14px; }
.nicon, .nicon .ic { display: block; width: 18px; height: 18px; }
.dot { position: relative; }
.dot::after { content: ""; position: absolute; right: -6px; top: -3px; width: 6px; height: 6px; border-radius: 3px; background: #f00; }
.nicon.dot::after { right: -10px; top: -2px; }
.sbar { flex: 1; padding: 104px 3px 13px; }
.thumb { height: 100%; border-radius: 4px; background: #cacaca; }

.mid { flex: 0 0 336px; margin-left: 4px; display: flex; flex-direction: column; gap: 4px; }
.panel { border: 1px solid #d8d8d8; display: flex; flex-direction: column; min-height: 0; }
.pa { flex: 225 0 0; }
.pb { flex: 433 0 0; }
.tabs { display: flex; height: 23px; flex: none; background: #f1f1f1; border-bottom: 1px solid #ddd; }
.tabs button { width: 65px; background: #dfdfdf; color: #777; border: 1px solid #c6c8ce; border-left: 0; }
.tabs .on { background: #f1f1f1; color: #222; font-weight: 600; }
.ptools { display: flex; height: 28px; flex: none; padding: 0 0 0 4px; gap: 13px; border-bottom: 1px solid #e0e0e0; }
.ptools button { gap: 3px; }
.ptools .tri { margin-left: 3px; }
.ptools .more { margin: 4px 1px 4px auto; width: 11px; gap: 0; border: 1px solid #e4e4e4; border-radius: 3px; }
.rt { border: 3px solid transparent; border-left: 4px solid #444; border-right: 0; }
.psearch { display: flex; align-items: center; height: 19px; flex: none; padding: 0 7px 0 2px; border-bottom: 1px solid #e0e0e0; --ink: #999; }
.psearch input { flex: 1; min-width: 0; height: 18px; outline: 0; }
.psearch input::placeholder { color: #999; opacity: 1; }
.props { border-collapse: collapse; table-layout: fixed; width: 333px; }
.c0 { width: 22px; } .c1 { width: 101px; } .c2 { width: 169px; } .c3 { width: 41px; }
.props th, .props td { height: 21px; padding: 0; font-weight: 400; text-align: center; border-right: 1px solid #ddd; border-bottom: 1px solid #ddd; }
.props td:first-child { background: #f0f0f0; border-color: #c4c4c4; }
.gutter { flex: 1; width: 22px; background: #efefef; }
.split { flex: 0 0 4px; background: #fff; display: flex; align-items: center; }
.split button { width: 4px; height: 100px; background: #5f6c78; }
.split button::after { content: ""; border: 3px solid transparent; border-right-color: #bbb; border-left: 0; }

/* 3D view */
.view { position: relative; flex: 1; min-width: 0; background: #000; overflow: hidden; }
.scene { display: block; width: 100%; height: 100%; fill: none; }
.num, .tiny, .dwg, .dscale { fill: #fff; }
.num { font-size: 18px; }
.ax { text-anchor: middle; }
.tiny { font-size: 5px; font-weight: 700; }
.dwg { font-size: 7px; font-weight: 900; }
.dscale { font-size: 9px; }
.axl { font-size: 15px; }
.hint { position: absolute; left: 0; right: 0; bottom: 0; height: 26px; background: rgba(48, 48, 48, .88); display: flex; justify-content: center; }
.hintmsg { position: relative; display: flex; align-items: center; gap: 3px; color: #fff; font-weight: 500; --ink: #fff; }
.tip-hint { position: absolute; left: -12px; bottom: 31px; width: 278px; height: 29px; padding: 0 20px 0 7px; display: flex; align-items: center; justify-content: space-between; background: #0090ff; border-radius: 3px; font-weight: 400; }
.tip-hint::after { content: ""; position: absolute; left: 15px; top: 100%; border: 5px solid transparent; border-top-color: #0090ff; border-bottom: 0; }
.tip-hint button { color: #84c8ff; }
.vtools { position: absolute; right: 1px; top: 0; width: 32px; padding: 12px 5px; display: flex; flex-direction: column; align-items: center; gap: 9px; background: #fff; border: 1px solid #ddd; border-radius: 2px; }
.vtools .ic, .two { width: 20px; height: 20px; }
.two { border: 1px solid #4a5060; border-radius: 1px; color: #1f78e8; font: 700 9px/11px "Noto Sans", sans-serif; padding: 8px 3px 0 0; }
.vtools .tri { border-width: 4px 4px 0; margin: -1px 0 -2px; }
.vtools hr { width: 23px; margin: -2px 0 -3px; border: 0; border-top: 1px solid #555; }

/* status */
.status { display: flex; align-items: center; height: 32px; flex: none; background: #fcfcfc; padding-left: 2px; border-top: 1px solid #e4e4e4; }
.info { display: flex; width: 450px; white-space: nowrap; }
.f1 { width: 90px; } .f2 { width: 140px; } .f3 { width: 110px; }
.snap { display: flex; gap: 3px; }
.snap button { width: 25px; height: 25px; border: 1px solid #8e8e8e; border-radius: 3px; gap: 4px; }
.snap .drop { width: 36px; }
.snap .on { background: #d6e6fb; border-color: #2f80e0; }
.snap .dim { margin: 0 3px; border-color: #b0b0b0; --ink: #999; }
.taskbar { display: flex; justify-content: space-between; height: 8px; flex: none; overflow: hidden; padding: 0 74px 0 409px; background: linear-gradient(90deg, #20323c, #24393f 45%, #1c2b3a); }
.task { width: 130px; background: #4d5f66; }
.taskbar time { color: #fff; line-height: 20px; }
```
